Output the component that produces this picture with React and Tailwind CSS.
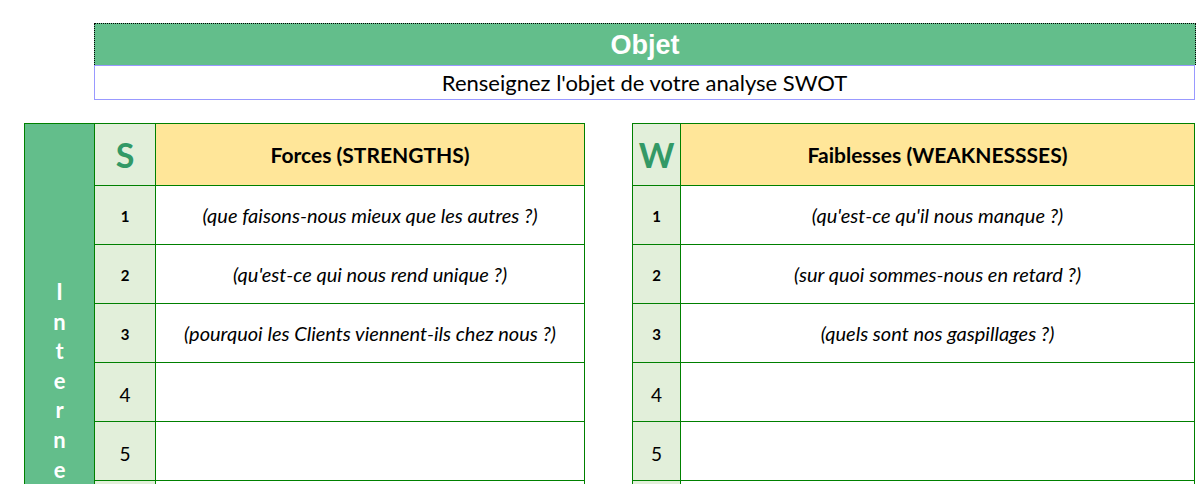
import React from "react";

const font = { fontFamily: "Lato, 'Open Sans', sans-serif" };

const strengths = [
  { n: "1", text: "(que faisons-nous mieux que les autres ?)" },
  { n: "2", text: "(qu'est-ce qui nous rend unique ?)" },
  { n: "3", text: "(pourquoi les Clients viennent-ils chez nous ?)" },
  { n: "4", text: "" },
  { n: "5", text: "" },
  { n: "", text: "" },
];

const weaknesses = [
  { n: "1", text: "(qu'est-ce qu'il nous manque ?)" },
  { n: "2", text: "(sur quoi sommes-nous en retard ?)" },
  { n: "3", text: "(quels sont nos gaspillages ?)" },
  { n: "4", text: "" },
  { n: "5", text: "" },
  { n: "", text: "" },
];

const NumCell = ({ n, w }) => {
  const small = Number(n) <= 3;
  return (
    <div
      className={`${w} shrink-0 flex items-center justify-center bg-[#e2efda] border-r border-[#008000] text-black ${
        small ? "text-[15px] font-bold pt-[2px]" : "text-[19px] pt-[6px]"
      }`}
    >
      {n}
    </div>
  );
};

const Quadrant = ({ letter, title, rows, numW, textW }) => (
  <div className="flex flex-col border-l border-t border-[#008000]">
    <div className="flex h-[62px] border-b border-[#008000]">
      <div
        className={`${numW} shrink-0 flex items-center justify-center bg-[#e2efda] border-r border-[#008000] text-[34px] font-bold text-[#339966]`}
      >
        {letter}
      </div>
      <div
        className={`${textW} shrink-0 flex items-center justify-center bg-[#ffe699] border-r border-[#008000] text-[21px] font-bold text-black`}
      >
        {title}
      </div>
    </div>
    {rows.map((r, i) => (
      <div key={i} className="flex h-[59px] border-b border-[#008000]">
        <NumCell n={r.n} w={numW} />
        <div
          className={`${textW} shrink-0 flex items-center justify-center border-r border-[#008000] text-[20px] italic text-black`}
        >
          {r.text}
        </div>
      </div>
    ))}
  </div>
);

export default function App() {
  return (
    <div className="w-[1200px] h-[484px] overflow-hidden bg-white" style={font}>
      <div className="pt-[23px] pl-[94px]">
        <div className="w-[1102px]">
          <div className="h-[42px] bg-[#63be8b] border-t border-l border-r border-dotted border-black flex items-center justify-center pt-[2px] text-white font-bold text-[27px] font-['Liberation_Sans',sans-serif]">
            Objet
          </div>
          <div className="h-[35px] w-[1101px] border border-[#9999ff] flex items-center justify-center text-[22px] text-black">
            Renseignez l'objet de votre analyse SWOT
          </div>
        </div>
      </div>

      <div className="flex gap-[47px] pl-[24px] pt-[23px]">
        <div className="flex">
          <div className="flex flex-col border-l border-t border-[#008000]">
            <div className="w-[70px] h-[500px] bg-[#63be8b] border-r border-[#008000] flex flex-col items-center pt-[153px] text-white font-bold text-[22px] leading-[29.6px]">
              {"Interne".split("").map((c, i) => (
                <span key={i}>{c}</span>
              ))}
            </div>
          </div>
          <div className="-ml-px">
            <Quadrant
              letter="S"
              title="Forces (STRENGTHS)"
              rows={strengths}
              numW="w-[61px]"
              textW="w-[429px]"
            />
          </div>
        </div>
        <Quadrant
          letter="W"
          title="Faiblesses (WEAKNESSSES)"
          rows={weaknesses}
          numW="w-[48px]"
          textW="w-[514px]"
        />
      </div>
    </div>
  );
}
